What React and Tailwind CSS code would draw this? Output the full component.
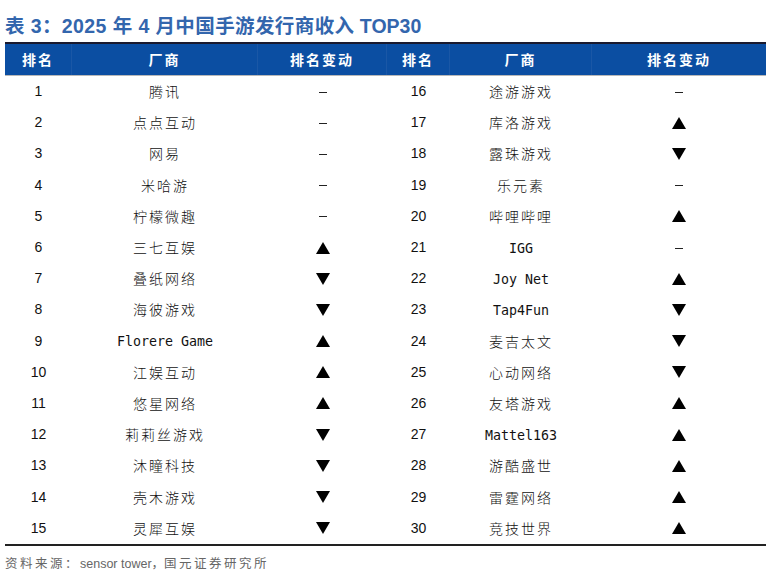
import React from "react";

const LEFT = [
  ["1", "腾讯", "-"],
  ["2", "点点互动", "-"],
  ["3", "网易", "-"],
  ["4", "米哈游", "-"],
  ["5", "柠檬微趣", "-"],
  ["6", "三七互娱", "up"],
  ["7", "叠纸网络", "down"],
  ["8", "海彼游戏", "down"],
  ["9", "Florere Game", "up"],
  ["10", "江娱互动", "up"],
  ["11", "悠星网络", "up"],
  ["12", "莉莉丝游戏", "down"],
  ["13", "沐瞳科技", "down"],
  ["14", "壳木游戏", "down"],
  ["15", "灵犀互娱", "down"],
];

const RIGHT = [
  ["16", "途游游戏", "-"],
  ["17", "库洛游戏", "up"],
  ["18", "露珠游戏", "down"],
  ["19", "乐元素", "-"],
  ["20", "哔哩哔哩", "up"],
  ["21", "IGG", "-"],
  ["22", "Joy Net", "up"],
  ["23", "Tap4Fun", "down"],
  ["24", "麦吉太文", "down"],
  ["25", "心动网络", "down"],
  ["26", "友塔游戏", "up"],
  ["27", "Mattel163", "up"],
  ["28", "游酷盛世", "up"],
  ["29", "雷霆网络", "up"],
  ["30", "竞技世界", "up"],
];

const cjk = { fontFamily: '"Noto Sans CJK SC", sans-serif' };
const latin = { fontFamily: '"DejaVu Sans Mono", "Liberation Mono", monospace' };
const num = { fontFamily: '"Liberation Sans", Arial, sans-serif' };

export default function App() {
  return (
    <div className="h-[574px] w-[771px] bg-white">
      <h1
        className="px-[5px] pt-[14px] text-[19.5px] font-bold leading-[24px] text-[#3366ad]"
        style={{ fontFamily: '"Liberation Sans", "Noto Sans CJK SC", sans-serif' }}
      >
        <span className="tracking-[0.4px]">表 3：2025 年 4 月中国手游发行商收入</span> TOP30
      </h1>

      <div className="mx-[5px] mt-[4px] w-[761px] border-t-2 border-b-2 border-t-[#1a1a2e] border-b-[#222]">
        <div className="flex h-[32px] items-center border-b border-b-[#b8b8b8] bg-[#0b4ea2] text-[14px] font-bold tracking-[2px] text-white" style={cjk}>
          <HeadCell w="w-[67px]">排名</HeadCell>
          <HeadCell w="w-[186px]">厂商</HeadCell>
          <HeadCell w="w-[129px]">排名变动</HeadCell>
          <HeadCell w="w-[63px]">排名</HeadCell>
          <HeadCell w="w-[142px]">厂商</HeadCell>
          <HeadCell w="w-[174px]" last>排名变动</HeadCell>
        </div>
        {LEFT.map((row, i) => (
          <div key={row[0]} className="flex h-[31.2px] items-center text-[14px] text-[#111]">
            <div className="w-[67px] text-center" style={num}>{row[0]}</div>
            <NameCell w="w-[186px]" name={row[1]} />
            <ChangeCell w="w-[129px]" v={row[2]} />
            <div className="w-[63px] text-center" style={num}>{RIGHT[i][0]}</div>
            <NameCell w="w-[142px]" name={RIGHT[i][1]} />
            <ChangeCell w="w-[174px]" v={RIGHT[i][2]} />
          </div>
        ))}
      </div>

      <p className="px-[5px] pt-[9px] text-[12.5px] leading-[18px] text-[#666]" style={{ fontFamily: '"Liberation Sans", "Noto Sans CJK SC", sans-serif' }}>
        <span className="tracking-[2.5px]">资料来源：</span>sensor tower，<span className="tracking-[2.5px]">国元证券研究所</span>
      </p>
    </div>
  );
}

function HeadCell({ w, children, last }) {
  return (
    <div className={`${w} flex h-full items-center justify-center ${last ? "" : "border-r border-r-[#1a57a6]"}`}>
      {children}
    </div>
  );
}

function NameCell({ w, name }) {
  const isLatin = /^[A-Za-z0-9 ]+$/.test(name);
  return (
    <div className={`${w} text-center`}>
      {isLatin ? (
        <span className="text-[13.3px]" style={latin}>{name}</span>
      ) : (
        <span className="text-[14px] tracking-[2px] font-light" style={cjk}>{name}</span>
      )}
    </div>
  );
}

function ChangeCell({ w, v }) {
  return (
    <div className={`${w} flex items-center justify-center`}>
      {v === "-" && <span className="mt-[1px] block h-[1px] w-[8px] bg-[#222]" />}
      {v === "up" && (
        <svg width="14" height="12" viewBox="0 0 14 12">
          <polygon points="7,0 14,12 0,12" fill="#000" />
        </svg>
      )}
      {v === "down" && (
        <svg width="14" height="12" viewBox="0 0 14 12">
          <polygon points="0,0 14,0 7,12" fill="#000" />
        </svg>
      )}
    </div>
  );
}
